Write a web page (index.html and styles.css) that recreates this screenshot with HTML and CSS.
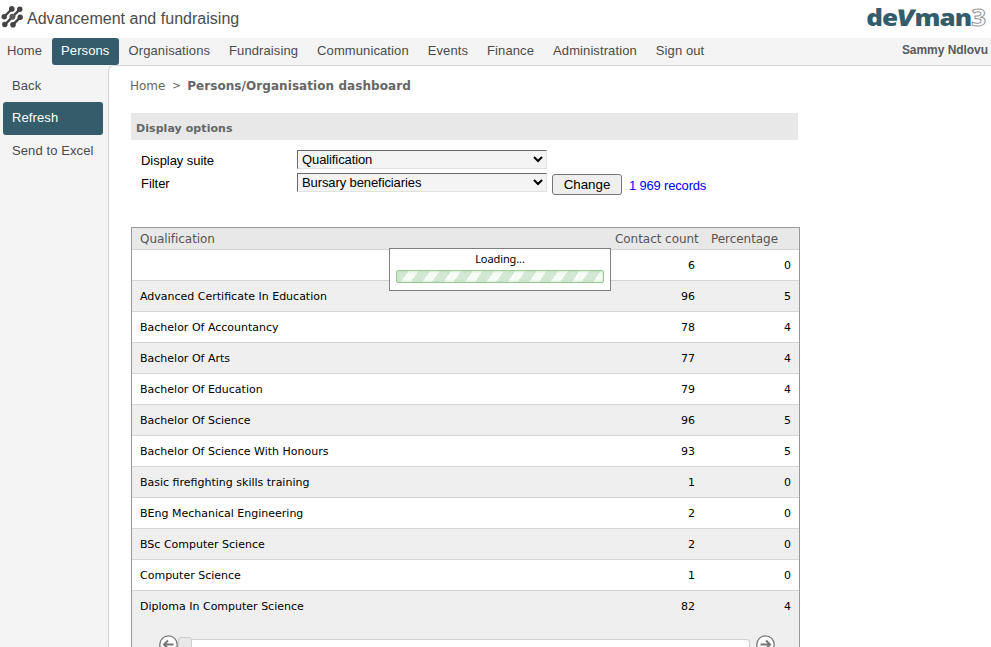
FILE: index.html
```
<!DOCTYPE html>
<html lang="en">
<head>
<meta charset="utf-8">
<title>Persons/Organisation dashboard</title>
<link rel="stylesheet" href="styles.css">
</head>
<body>
<header class="top">
  <svg class="mark" width="24" height="28" viewBox="0 0 24 28">
    <g stroke="#444" stroke-width="2.400" stroke-linecap="round" fill="none">
      <path d="M4.500 16.500 11.800 9M5 24.500 20 9.200M13 24.700 20.200 17.400"/>
    </g>
    <g fill="#444">
      <circle cx="11.800" cy="8.900" r="2.800"/><circle cx="19.800" cy="9.200" r="2.700"/>
      <circle cx="4.200" cy="16.700" r="2.700"/><circle cx="12.400" cy="16.800" r="3" fill="#5a5a5a"/><circle cx="20.200" cy="17.300" r="2.700"/>
      <circle cx="4.800" cy="24.500" r="2.700"/><circle cx="13" cy="24.800" r="2.800"/>
    </g>
  </svg>
  <h1>Advancement and fundraising</h1>
  <div class="brand">de<i>V</i>man<span>3</span></div>
</header>
<nav class="menu">
  <a>Home</a><a class="on">Persons</a><a>Organisations</a><a>Fundraising</a><a>Communication</a><a>Events</a><a>Finance</a><a>Administration</a><a>Sign out</a>
  <b class="user">Sammy Ndlovu</b>
</nav>
<div class="body">
  <aside class="side"><a>Back</a><a class="on">Refresh</a><a>Send to Excel</a></aside>
  <main>
    <div class="crumbs"><span>Home</span><span class="sep">&gt;</span><b>Persons/Organisation dashboard</b></div>
    <h2>Display options</h2>
    <form class="options">
      <label>Display suite</label>
      <div class="field"><select><option>Qualification</option></select></div>
      <label>Filter</label>
      <div class="field"><select><option>Bursary beneficiaries</option></select><button type="button">Change</button><span class="records">1 969 records</span></div>
    </form>
    <section class="grid">
      <div class="head"><span>Qualification</span><span>Contact count</span><span>Percentage</span></div>
      <div class="row"><span></span><span>6</span><span>0</span></div>
      <div class="row"><span>Advanced Certificate In Education</span><span>96</span><span>5</span></div>
      <div class="row"><span>Bachelor Of Accountancy</span><span>78</span><span>4</span></div>
      <div class="row"><span>Bachelor Of Arts</span><span>77</span><span>4</span></div>
      <div class="row"><span>Bachelor Of Education</span><span>79</span><span>4</span></div>
      <div class="row"><span>Bachelor Of Science</span><span>96</span><span>5</span></div>
      <div class="row"><span>Bachelor Of Science With Honours</span><span>93</span><span>5</span></div>
      <div class="row"><span>Basic firefighting skills training</span><span>1</span><span>0</span></div>
      <div class="row"><span>BEng Mechanical Engineering</span><span>2</span><span>0</span></div>
      <div class="row"><span>BSc Computer Science</span><span>2</span><span>0</span></div>
      <div class="row"><span>Computer Science</span><span>1</span><span>0</span></div>
      <div class="row last"><span>Diploma In Computer Science</span><span>82</span><span>4</span></div>
      <div class="scroller">
        <svg width="19" height="19" viewBox="0 0 19 19"><circle cx="9.500" cy="9.500" r="8.700" fill="#fff" stroke="#777" stroke-width="1.300"/><path d="M14.500 9.500H5.500M9 5.500 5 9.500l4 4" fill="none" stroke="#777" stroke-width="2"/></svg>
        <div class="track"><div class="thumb"></div></div>
        <svg width="19" height="19" viewBox="0 0 19 19"><circle cx="9.500" cy="9.500" r="8.700" fill="#fff" stroke="#777" stroke-width="1.300"/><path d="M4.500 9.500h9M10 5.500l4 4-4 4" fill="none" stroke="#777" stroke-width="2"/></svg>
      </div>
      <div class="loading"><span>Loading...</span><div class="bar"></div></div>
    </section>
  </main>
</div>
</body>
</html>
```
FILE: styles.css
```
* { box-sizing: border-box; }
body { margin: 0; height: 647px; overflow: hidden; background: #fff; font-family: "Liberation Sans", sans-serif; color: #4b4b4b; }
.top { height: 38px; display: flex; align-items: flex-start; }
.mark { overflow: visible; }
h1 { margin: 9px 0 0 3px; font-size: 16px; line-height: 19px; font-weight: 400; white-space: nowrap; letter-spacing: .02px; }
.brand { margin: 1px 6px 0 auto; font: 800 23px/32px "Open Sans", sans-serif; color: #355c6b; letter-spacing: -.8px; white-space: nowrap; transform: scaleX(1.13); transform-origin: right; }
.brand i { font-style: normal; display: inline-block; transform: skewX(-10deg); }
.brand span { color: #fff; font-weight: 700; -webkit-text-stroke: 1px #999; }
.menu { height: 28px; display: flex; background: #f4f4f4; border-bottom: 1px solid #d5d5d5; font-size: 13px; line-height: 26px; }
.menu a { height: 27px; padding: 0 9px; margin-right: 1px; letter-spacing: .1px; white-space: nowrap; }
.menu a:first-child { padding-left: 7px; }
.menu .on { position: relative; padding-right: 9.500px; margin-right: .6px; background: #355c6b; color: #fff; border-radius: 3px; }
.user { margin: 0 3px 0 auto; font-size: 12px; line-height: 25px; color: #5a5a5a; letter-spacing: -.05px; }
.body { display: flex; height: 582px; margin-top: -1px; background: #f4f4f4; }
.side { width: 108px; padding: 4px 5px 0 3px; font-size: 13px; }
.side a { display: block; height: 33px; line-height: 33px; padding-left: 9px; letter-spacing: .1px; border-radius: 3px; }
.side .on { background: #355c6b; color: #fff; line-height: 32px; }
.side a:last-child { line-height: 31px; }
main { flex: 1; padding: 11px 0 0 21px; background: #fff; border-left: 1px solid #d5d5d5; border-top: 1px solid #d5d5d5; border-top-left-radius: 6px; }
.crumbs { height: 18px; line-height: 18px; display: flex; font-family: "DejaVu Sans", sans-serif; font-size: 12px; color: #666; }
.crumbs b { letter-spacing: .07px; }
.crumbs .sep { margin: 0 6px 0 6.500px; font-size: 11px; }
h2 { margin: 18px 0 0 1px; width: 667px; height: 27px; padding: 2px 0 0 5px; background: #e8e8e8; color: #666; font: bold 11px/27px "DejaVu Sans", sans-serif; letter-spacing: .07px; }
.options { margin: 10px 0 0 11px; display: grid; grid-template-columns: 156px auto; grid-template-rows: 23px 23px; color: #000; font-size: 13px; line-height: 21px; letter-spacing: -.05px; }
.field { display: flex; align-items: flex-start; }
select { width: 250px; height: 19px; padding: 0; background: #f4f4f4; color: #000; border: 1px solid #e2e2e2; border-top-color: #6a6a6a; border-left-color: #6a6a6a; border-radius: 0; font: 13px "Liberation Sans", sans-serif; letter-spacing: -.1px; }
button { width: 70px; height: 21px; margin: 1px 7px 0 5px; padding: 0; border: 1px solid #767676; border-radius: 3px; background: #efefef; color: #000; font: 13.333px "Liberation Sans", sans-serif; }
.records { color: #00f; margin-top: 2px; letter-spacing: -.18px; }
.grid { position: relative; width: 669px; height: 440px; margin: 31px 0 0 1px; border: 1px solid #999; background: #efefef; font-family: "DejaVu Sans", sans-serif; font-size: 11px; color: #000; }
.head, .row { display: grid; grid-template-columns: 471px 84px 1fr; padding: 0 8px 0 8px; }
.head { height: 22px; line-height: 22px; font-size: 12px; color: #555; background: #e8e8e8; border-bottom: 1px solid #d5d5d5; grid-template-columns: 475px 96px 1fr; letter-spacing: -.05px; }
.row { height: 31px; line-height: 32px; background: #fff; border-bottom: 1px solid #d5d5d5; }
.row:nth-child(odd) { background: #efefef; }
.row span:nth-child(n+2) { text-align: right; }
.row.last { border-bottom: 0; }
.scroller { display: flex; padding: 13px 0 0 27px; }
.track { width: 572px; height: 14px; margin: 4px 6px 0 0; background: #fff; border-top: 1px solid #d0d0d0; border-right: 1px solid #ccc; border-radius: 0 4px 0 0; }
.thumb { width: 14px; height: 16px; margin-top: -3px; background: #e8e8e8; border: 1px solid #ccc; border-radius: 3px; }
.loading { position: absolute; left: 257px; top: 20px; width: 222px; height: 43px; padding: 3px 6px; background: #fff; border: 1px solid #808080; text-align: center; font: 11px/14px "Noto Sans", sans-serif; }
.loading span { display: block; height: 18px; line-height: 14px; letter-spacing: -.1px; }
.bar { height: 13px; border: 1px solid #9c9; border-radius: 2px; background: repeating-linear-gradient(125deg, #d3e9d3 0 9.500px, #f7fcf7 9.500px 17.500px); box-shadow: inset 0 0 3px #b5dcb5; }
```
